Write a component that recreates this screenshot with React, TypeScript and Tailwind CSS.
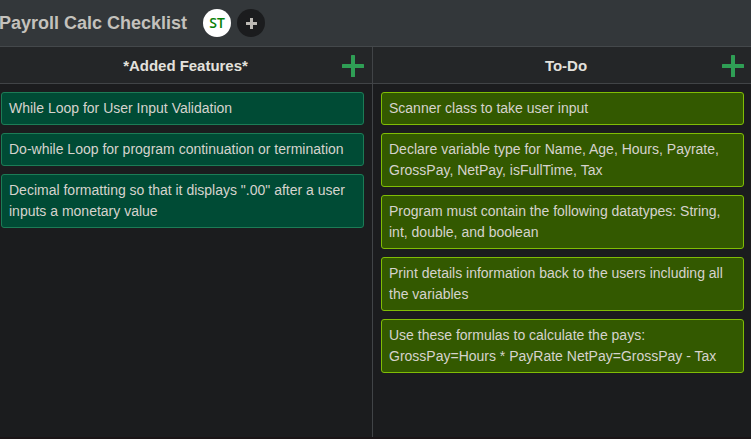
type ColumnProps = {
  title: string;
  cards: { lines: string[] }[];
  tone: string;
  className: string;
};

function Column({ title, cards, tone, className }: ColumnProps) {
  return (
    <section className={`flex shrink-0 flex-col ${className}`}>
      <header className="grid h-[37px] shrink-0 grid-cols-[1fr_auto_1fr] items-center border-b border-[#414447] bg-[#242628]">
        <span />
        <h2 className="text-[15px] leading-[21px] font-bold tracking-[-0.03px] text-[#e3e1dd]">{title}</h2>
        <button className="mt-0.5 mr-2 justify-self-end" aria-label="Add card">
          <svg width="22" height="22" viewBox="0 0 22 22" className="block" fill="#2f9e55">
            <rect x="9" y="0" width="4" height="22" rx="0.5" />
            <rect x="0" y="9" width="22" height="4" rx="0.5" />
          </svg>
        </button>
      </header>
      <ul className="flex flex-col gap-2 pt-2 pr-2">
        {cards.map((card) => (
          <li
            key={card.lines[0]}
            className={`rounded-[3px] border px-[7px] py-[5px] text-[14px] leading-[21px] whitespace-nowrap text-[#d6d3cd] ${tone}`}
          >
            {card.lines.map((line) => (
              <p key={line}>{line}</p>
            ))}
          </li>
        ))}
      </ul>
    </section>
  );
}

const added = [
  { lines: ["While Loop for User Input Validation"] },
  { lines: ["Do-while Loop for program continuation or termination"] },
  { lines: ['Decimal formatting so that it displays ".00" after a user', "inputs a monetary value"] },
];

const todo = [
  { lines: ["Scanner class to take user input"] },
  { lines: ["Declare variable type for Name, Age, Hours, Payrate,", "GrossPay, NetPay, isFullTime, Tax"] },
  { lines: ["Program must contain the following datatypes: String,", "int, double, and boolean"] },
  { lines: ["Print details information back to the users including all", "the variables"] },
  { lines: ["Use these formulas to calculate the pays:", "GrossPay=Hours * PayRate NetPay=GrossPay - Tax"] },
];

export default function App() {
  return (
    <main className="flex h-[439px] w-[751px] flex-col overflow-hidden border-b-2 border-[#1b1517] bg-[#1b1c1e] font-['Liberation_Sans',Arial,sans-serif]">
      <header className="flex h-[47px] shrink-0 items-center border-b border-[#44484b] bg-[#33373a]">
        <h1 className="-ml-px w-[204px] text-[18px] leading-[22px] font-bold whitespace-nowrap text-[#c4c1bc]">
          Payroll Calc Checklist
        </h1>
        <div className="flex size-7 items-center justify-center rounded-full bg-white font-['Open_Sans','Noto_Sans',sans-serif] text-[14px] leading-5 font-semibold text-[#078007]">
          ST
        </div>
        <button
          className="ml-1.5 flex size-7 items-center justify-center rounded-full bg-[#1b1c1e]"
          aria-label="Add member"
        >
          <svg width="12" height="12" viewBox="0 0 12 12" fill="#bdbab5">
            <rect x="5" y="1" width="3" height="11" />
            <rect x="1" y="5" width="11" height="3" />
          </svg>
        </button>
      </header>
      <div className="flex grow">
        <Column
          title="*Added Features*"
          cards={added}
          tone="border-[#1c7c56] bg-[#004b35]"
          className="w-[373px] border-r border-[#414447] [&_button]:mr-[7px] [&>header]:pr-px [&>ul]:pl-px"
        />
        <Column
          title="To-Do"
          cards={todo}
          tone="border-[#80bd05] bg-[#335900]"
          className="w-[379px] [&>header]:pl-[7px] [&>ul]:pl-2"
        />
      </div>
    </main>
  );
}
